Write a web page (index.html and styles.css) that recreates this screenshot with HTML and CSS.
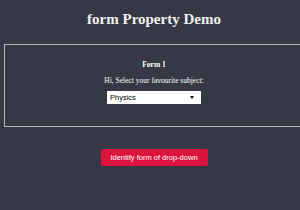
FILE: index.html
```html
<!DOCTYPE html>
<html lang="en">
  <head>
    <meta charset="UTF-8" />
    <title>form Property Demo</title>
    <link rel="stylesheet" href="styles.css">
  </head>
  <body>
    <h1 class="title">form Property Demo</h1>
    <div class="box">
      <form id="form1" class="form">
        <div class="form-name">Form 1</div>
        <div class="ask">Hi, Select your favourite subject:</div>
        <span class="pick">
          <select name="subject" class="subject">
            <option>Physics</option>
            <option>Chemistry</option>
            <option>Maths</option>
          </select>
        </span>
      </form>
    </div>
    <div class="actions">
      <button type="button" class="btn">Identify form of drop-down</button>
    </div>
  </body>
</html>
```
FILE: styles.css
```css
html {
  overflow: hidden;
  background-color: #363945;
}
body {
  margin: 0;
  padding: 0 4px;
  width: 300px;
  color: #fff;
  font-family: "Liberation Serif", serif;
}
.title {
  margin: 0;
  padding-top: 10px;
  height: 34px;
  font-size: 15px;
  line-height: 18px;
  text-align: center;
  color: #f2f2f2;
}
.box {
  border: 1px solid #b4b6bc;
  height: 83px;
  box-sizing: border-box;
}
.form {
  text-align: center;
  padding-top: 15px;
}
.form-name {
  font-size: 7.5px;
  font-weight: bold;
  line-height: 10px;
}
.ask {
  margin-top: 6px;
  font-size: 7.5px;
  line-height: 10px;
}
.pick {
  position: relative;
  display: inline-block;
  margin-top: 3px;
}
.pick::after {
  content: "";
  position: absolute;
  right: 7px;
  top: 5px;
  border-left: 2px solid transparent;
  border-right: 2px solid transparent;
  border-top: 3px solid #000;
  pointer-events: none;
}
.subject {
  display: block;
  width: 94px;
  height: 13px;
  font-family: "Liberation Sans", sans-serif;
  font-size: 7.5px;
  border: none;
  border-radius: 0;
  padding: 0 3px;
  background: #fff;
  color: #000;
  -webkit-appearance: none;
  appearance: none;
}
.actions {
  text-align: center;
  padding-top: 19px;
}
.btn {
  width: 107px;
  height: 17px;
  padding: 0;
  border: none;
  border-radius: 2px;
  background-color: #dc143c;
  color: #fff;
  font-family: "Liberation Sans", sans-serif;
  font-size: 7.5px;
}
```
